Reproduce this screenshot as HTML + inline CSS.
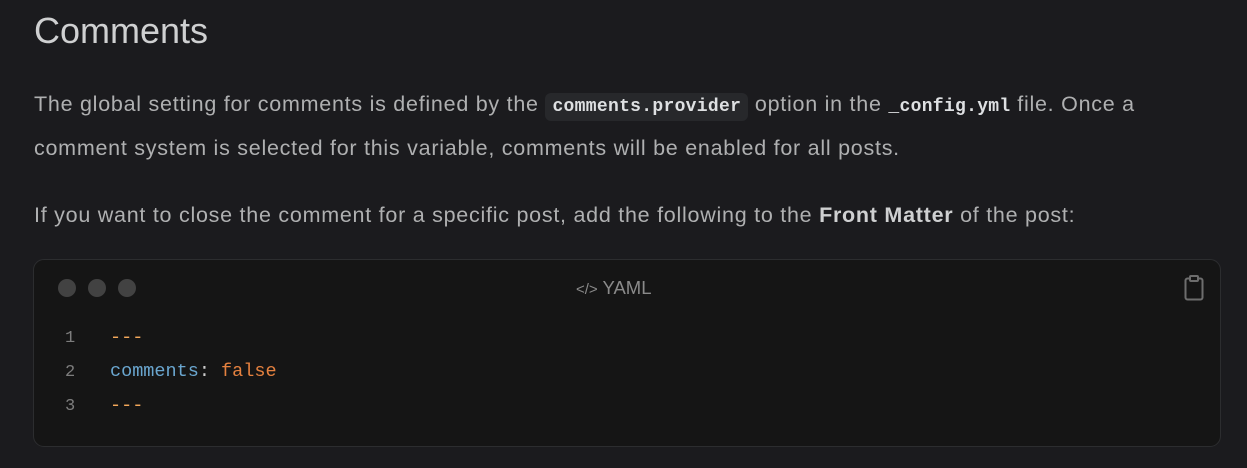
<!DOCTYPE html>
<html><head><meta charset="utf-8"><style>
html,body{margin:0;padding:0;background:#1b1b1e;width:1247px;height:468px;overflow:hidden}
body{font-family:"Liberation Sans",sans-serif;color:#afb0b1;position:relative}
.a{position:absolute;white-space:nowrap}
h2{position:absolute;left:34px;top:10px;margin:0;font-weight:400;font-size:36px;color:#cfd0d1}
p{margin:0;font-size:21.5px;letter-spacing:0.74px}
code{font-family:"Liberation Mono",monospace;font-size:18px;color:#dee0e2;font-weight:bold;letter-spacing:0.3px}
.ic{background:#27282b;border-radius:6px;padding:4px 7px}
.blk{position:absolute;left:33px;top:259px;width:1188px;height:188px;background:#151515;border:1px solid #2c2d2f;border-radius:11px;box-sizing:border-box}
.dot{position:absolute;top:19px;width:18px;height:18px;border-radius:50%;background:#424242}
.ln{position:absolute;left:65px;font-family:"Liberation Mono",monospace;font-size:17px;color:#7d7d7d}
.cd{position:absolute;left:110px;font-family:"Liberation Mono",monospace;font-size:18.5px}
</style></head><body>
<h2>Comments</h2>
<p class="a" style="left:34px;top:92px">The global setting for comments is defined by the <code class="ic">comments.provider</code> option in the <code>_config.yml</code> file. Once a</p>
<p class="a" style="left:34px;top:136px">comment system is selected for this variable, comments will be enabled for all posts.</p>
<p class="a" style="left:34px;top:203px">If you want to close the comment for a specific post, add the following to the <b style="color:#cfd0d1">Front Matter</b> of the post:</p>
<div class="blk">
<div class="dot" style="left:24px"></div><div class="dot" style="left:54px"></div><div class="dot" style="left:84px"></div>
<div class="a" style="left:542px;top:17px;font-size:18.5px;color:#8a8a8a"><span style="font-size:15px">&lt;/&gt;</span> YAML</div>
<svg class="a" style="left:1149px;top:14px" width="22" height="28" viewBox="0 0 22 28"><rect x="2.5" y="4.5" width="17" height="21" rx="2" fill="none" stroke="#6d6d6d" stroke-width="2"/><rect x="7" y="2" width="8" height="5" rx="1" fill="#151515" stroke="#6d6d6d" stroke-width="2"/></svg>
</div>
<div class="ln" style="top:329px">1</div><div class="ln" style="top:363px">2</div><div class="ln" style="top:397px">3</div>
<div class="cd" style="top:327px;color:#f5a95b">---</div>
<div class="cd" style="top:361px"><span style="color:#6aa6cf">comments</span><span style="color:#ccc">:</span> <span style="color:#e5813f">false</span></div>
<div class="cd" style="top:395px;color:#f5a95b">---</div>
</body></html>
